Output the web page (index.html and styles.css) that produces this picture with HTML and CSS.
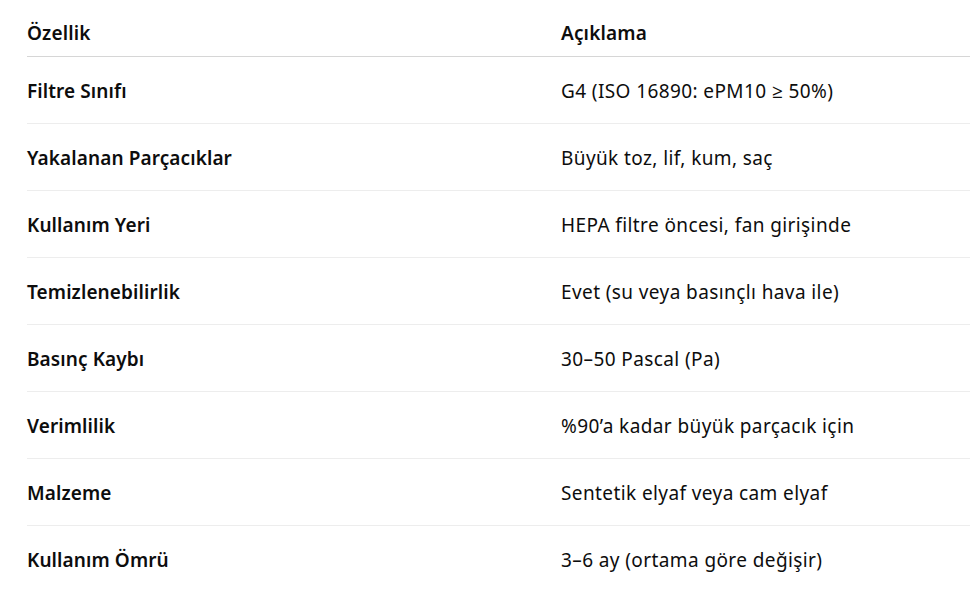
FILE: index.html
```html
<!DOCTYPE html>
<html lang="tr">
<head>
<meta charset="utf-8">
<title>Filtre Özellikleri</title>
<link rel="stylesheet" href="styles.css">
</head>
<body>
<div class="wrap">
  <table class="spec">
    <colgroup><col class="c1"><col class="c2"></colgroup>
    <thead>
      <tr><th>Özellik</th><th>Açıklama</th></tr>
    </thead>
    <tbody>
      <tr><td class="k">Filtre Sınıfı</td><td>G4 (ISO 16890: ePM10 ≥ 50%)</td></tr>
      <tr><td class="k">Yakalanan Parçacıklar</td><td>Büyük toz, lif, kum, saç</td></tr>
      <tr><td class="k">Kullanım Yeri</td><td>HEPA filtre öncesi, fan girişinde</td></tr>
      <tr><td class="k">Temizlenebilirlik</td><td>Evet (su veya basınçlı hava ile)</td></tr>
      <tr><td class="k">Basınç Kaybı</td><td>30–50 Pascal (Pa)</td></tr>
      <tr><td class="k">Verimlilik</td><td>%90’a kadar büyük parçacık için</td></tr>
      <tr><td class="k">Malzeme</td><td>Sentetik elyaf veya cam elyaf</td></tr>
      <tr><td class="k">Kullanım Ömrü</td><td>3–6 ay (ortama göre değişir)</td></tr>
    </tbody>
  </table>
</div>
</body>
</html>
```
FILE: styles.css
```css
html, body {
  margin: 0;
  padding: 0;
  background: #ffffff;
  overflow: hidden;
}
.wrap {
  padding-left: 27px;
}
.spec {
  border-collapse: collapse;
  table-layout: fixed;
  width: 100%;
  font-family: "Noto Sans", "Open Sans", sans-serif;
  font-size: 19px;
  line-height: 28px;
  color: #0d0d0d;
}
.c1 { width: 534px; }
.spec th {
  text-align: left;
  font-weight: 600;
  letter-spacing: 0.15px;
  padding: 19px 0 9px 0;
  border-bottom: 1px solid #d6d6d6;
  white-space: nowrap;
}
.spec td {
  padding: 20px 0 18px 0;
  border-bottom: 1px solid #ededed;
  font-weight: 400;
  letter-spacing: 0.4px;
  white-space: nowrap;
}
.spec td.k {
  font-weight: 600;
  letter-spacing: 0.1px;
}
.spec tbody tr:last-child td {
  border-bottom: none;
}
```
